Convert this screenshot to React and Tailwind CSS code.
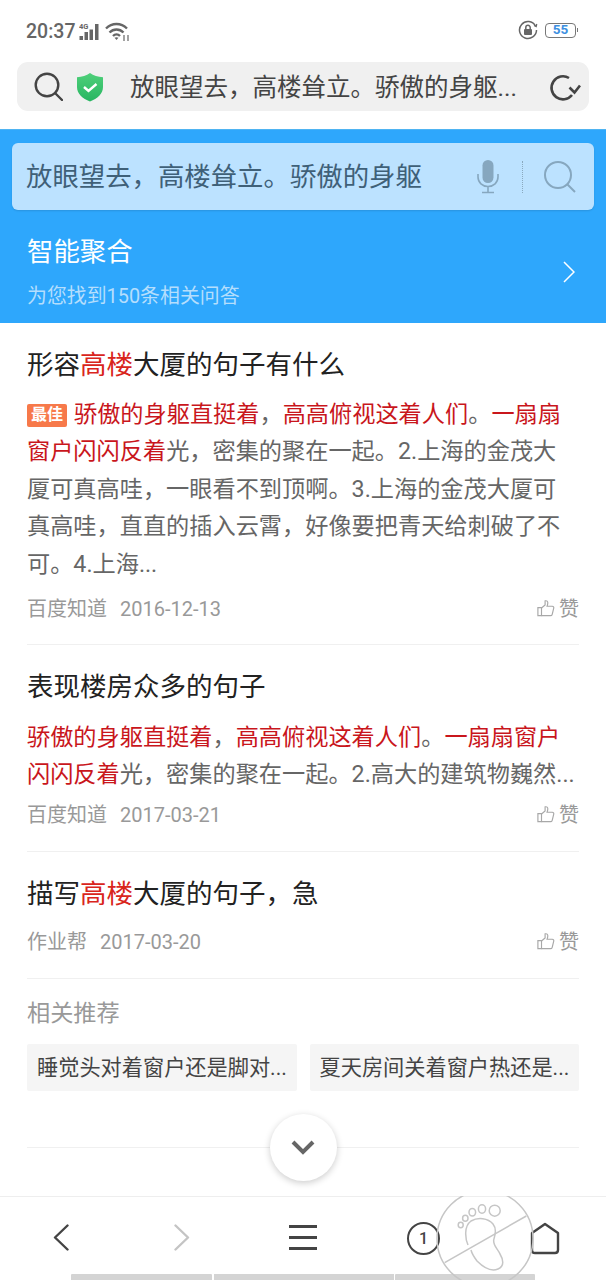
const CJK = { fontFamily: 'Roboto, "Noto Sans CJK SC", sans-serif' };

const R = ({ children }) => <span className="text-[#c9161c]">{children}</span>;

function Like() {
  return (
    <span className="flex items-center gap-[4px] text-[20px] leading-[26px] text-[#999999]">
      <svg width="18" height="19" viewBox="0 0 20 20" fill="none" stroke="#a8a8a8" strokeWidth="1.300" className="-mt-[2px]">
        <path d="M1 9h4v9H1z" />
        <path d="M5 9.500 9 6V1.500c2-.6 3 .8 3 2.200 0 1.300-.4 2.800-.8 3.800H17c1.200 0 1.900 1 1.600 2.100l-1.700 6.800c-.2.900-.9 1.600-1.900 1.600H5" />
      </svg>
      赞
    </span>
  );
}

function Meta({ source, date, className }) {
  return (
    <div className={`flex items-center justify-between text-[20px] leading-[26px] text-[#999999] ${className}`}>
      <span className="flex gap-[13px]">
        <span>{source}</span>
        <span>{date}</span>
      </span>
      <Like />
    </div>
  );
}

export default function App() {
  return (
    <div className="relative flex h-[1280px] w-[606px] flex-col overflow-hidden bg-white" style={CJK}>
      {/* status bar */}
      <div className="flex h-[62px] shrink-0 items-start justify-between pl-[26px] pr-[28px] pt-[20px]">
        <div className="flex items-center gap-[4px] text-[#666666]">
          <span className="text-[19.500px] font-medium leading-[24px]">20:37</span>
          <svg width="22" height="18" viewBox="0 0 22 18" fill="#666666">
            <text x="0" y="6" fontSize="7.500" fontWeight="700" fontFamily="Roboto, sans-serif">4G</text>
            <rect x="0.500" y="13" width="3.500" height="4" />
            <rect x="5.500" y="9" width="3.500" height="8" />
            <rect x="10.500" y="6.500" width="3.500" height="10.500" />
            <rect x="16" y="1" width="3.500" height="16" />
          </svg>
          <svg width="25" height="20" viewBox="0 0 25 20" fill="none" stroke="#666666" strokeWidth="2.400">
            <path d="M1 6.500c6-6 15-6 21 0" />
            <path d="M4.500 10.500c4-4 10-4 14 0" />
            <path d="M8 14c2-2 5-2 7 0" />
            <path d="M11.500 18l-2-2.200c1.200-.8 2.800-.8 4 0z" fill="#666666" stroke="none" />
            <path d="M19 13v6M23 13v6" strokeWidth="1.200" />
          </svg>
        </div>
        <div className="flex items-center gap-[7px]">
          <svg width="20" height="20" viewBox="0 0 20 20" fill="none" stroke="#666666" strokeWidth="1.500">
            <path d="M17.500 6A8.500 8.500 0 1 0 18.500 10" />
            <path d="M16 5.500l2.200 1.200L18.800 4" strokeWidth="1.200" />
            <rect x="6" y="9" width="8" height="6" rx="1" fill="#666666" stroke="none" />
            <path d="M7.800 9V7.500a2.200 2.200 0 0 1 4.400 0V9" />
          </svg>
          <div className="flex items-center">
            <div className="flex h-[15px] w-[31px] items-center justify-center rounded-[4px] border border-[#777777] text-[13.500px] font-bold leading-none text-[#3d8fe0]">55</div>
            <div className="ml-[1px] h-[4px] w-[1px] bg-[#777777]" />
          </div>
        </div>
      </div>

      {/* address bar */}
      <div className="flex h-[67px] shrink-0 flex-col px-[17px]">
        <div className="flex h-[49px] items-center rounded-[11px] bg-[#f0f0f0] pl-[17px] pr-[8px]">
          <svg width="29" height="29" viewBox="0 0 29 29" fill="none" stroke="#444444" strokeWidth="2.400" className="shrink-0">
            <circle cx="13" cy="13" r="11.300" />
            <path d="M21 21l7 7" strokeLinecap="round" />
          </svg>
          <svg width="28" height="30" viewBox="0 0 28 30" className="ml-[13px] shrink-0">
            <defs>
              <linearGradient id="sh" x1="0" y1="0" x2="0" y2="1">
                <stop offset="0" stopColor="#4fd07a" />
                <stop offset="1" stopColor="#27b561" />
              </linearGradient>
            </defs>
            <path d="M14 1c3.500 2.600 8 4 13 4.300V15c0 6.500-5.500 11.800-13 14.500C6.500 26.800 1 21.500 1 15V5.300C6 5 10.500 3.600 14 1z" fill="url(#sh)" />
            <path d="M8 15l4.500 4L20.500 12" fill="none" stroke="#ffffff" strokeWidth="2.400" />
          </svg>
          <span className="ml-[26px] flex-1 whitespace-nowrap pt-[1px] text-[24.500px] leading-[49px] text-[#444444]">放眼望去，高楼耸立。骄傲的身躯...</span>
          <svg width="33" height="30" viewBox="0 0 33 30" fill="none" stroke="#444444" strokeWidth="2.600" className="shrink-0">
            <path d="M21 6A11.500 11.500 0 1 0 24 23" />
            <path d="M21.500 15.500l5 5L32 13.500" />
          </svg>
        </div>
      </div>

      {/* blue header */}
      <div className="flex h-[194px] shrink-0 flex-col border-t border-[#4fb4f2] bg-[#2ea7fc] px-[12px] pt-[13px]">
        <div className="flex h-[67px] shrink-0 items-center rounded-[6px] bg-[#bce2ff] pl-[14px] pr-[18px] shadow-[0_1px_2px_rgba(0,0,0,0.12)]">
          <span className="flex-1 whitespace-nowrap pt-[2px] text-[26.400px] leading-none text-[#3f6078]">放眼望去，高楼耸立。骄傲的身躯</span>
          <svg width="22" height="34" viewBox="0 0 22 34" className="shrink-0">
            <rect x="5.500" y="0" width="11" height="23" rx="5.500" fill="#86a7bf" />
            <path d="M1 14v3c0 5.500 4.500 9.500 10 9.500s10-4 10-9.500v-3M11 27v5M5 32.500h12" fill="none" stroke="#86a7bf" strokeWidth="1.600" />
          </svg>
          <div className="ml-[23px] h-[32px] w-0 border-l border-dotted border-[#8aa9bf]" />
          <svg width="32" height="32" viewBox="0 0 32 32" fill="none" stroke="#86a7bf" strokeWidth="2" className="ml-[21px] shrink-0">
            <circle cx="14" cy="14" r="13" />
            <path d="M23.500 23.500l7.500 7.500" />
          </svg>
        </div>
        <div className="flex flex-1 items-start justify-between pl-[15px] pr-[19px] pt-[27px]">
          <div className="flex flex-col">
            <span className="text-[26.400px] leading-[30px] text-white">智能聚合</span>
            <span className="mt-[17px] text-[19.900px] leading-[26px] text-[#b5defc]">为您找到150条相关问答</span>
          </div>
          <svg width="12" height="22" viewBox="0 0 12 22" fill="none" stroke="#ffffff" strokeWidth="1.500" className="mt-[24px]">
            <path d="M1 1l10 10L1 21" />
          </svg>
        </div>
      </div>

      {/* list */}
      <div className="flex flex-1 flex-col px-[27px]">
        <div className="flex h-[322px] shrink-0 flex-col border-b border-[#f0f0f0] pt-[26px]">
          <h2 className="text-[26.500px] font-normal leading-[32px] text-[#222222]">形容<span className="text-[#d9251c]">高楼</span>大厦的句子有什么</h2>
          <div className="mt-[15px] h-[188px] whitespace-nowrap text-[23.200px] leading-[37.400px] text-[#666666]">
            <span className="mr-[7px] inline-flex h-[23px] w-[40px] items-center justify-center rounded-[2px] bg-[#f7794a] align-[2px] text-[16px] font-bold leading-none text-white">最佳</span>
            <R>骄傲的身躯直挺着</R>，<R>高高俯视这着人们</R>。<R>一扇扇</R>
            <br />
            <R>窗户闪闪反着</R>光，密集的聚在一起。2.上海的金茂大
            <br />
            厦可真高哇，一眼看不到顶啊。3.上海的金茂大厦可
            <br />
            真高哇，直直的插入云霄，好像要把青天给刺破了不
            <br />
            可。4.上海...
          </div>
          <Meta source="百度知道" date="2016-12-13" className="mt-[12px]" />
        </div>

        <div className="flex h-[207px] shrink-0 flex-col border-b border-[#f0f0f0] pt-[26px]">
          <h2 className="text-[26.500px] font-normal leading-[32px] text-[#222222]">表现楼房众多的句子</h2>
          <div className="mt-[16px] h-[75px] whitespace-nowrap text-[23.200px] leading-[37.400px] text-[#666666]">
            <R>骄傲的身躯直挺着</R>，<R>高高俯视这着人们</R>。<R>一扇扇窗户</R>
            <br />
            <R>闪闪反着</R>光，密集的聚在一起。2.高大的建筑物巍然...
          </div>
          <Meta source="百度知道" date="2017-03-21" className="mt-[8px]" />
        </div>

        <div className="flex h-[127px] shrink-0 flex-col border-b border-[#f0f0f0] pt-[26px]">
          <h2 className="text-[26.500px] font-normal leading-[32px] text-[#222222]">描写<span className="text-[#d9251c]">高楼</span>大厦的句子，急</h2>
          <Meta source="作业帮" date="2017-03-20" className="mt-[19px]" />
        </div>

        <div className="flex h-[169px] shrink-0 flex-col border-b border-[#f0f0f0] pt-[20px]">
          <span className="text-[23.200px] leading-[28px] text-[#999999]">相关推荐</span>
          <div className="mt-[17px] grid grid-cols-2 gap-[13px]">
            <div className="flex h-[47px] items-center overflow-hidden whitespace-nowrap rounded-[2px] bg-[#f5f5f5] pl-[10px] text-[21.200px] text-[#444444]">睡觉头对着窗户还是脚对...</div>
            <div className="flex h-[47px] items-center overflow-hidden whitespace-nowrap rounded-[2px] bg-[#f5f5f5] pl-[10px] text-[21.200px] text-[#444444]">夏天房间关着窗户热还是...</div>
          </div>
        </div>
      </div>

      {/* bottom toolbar */}
      <div className="flex h-[84px] shrink-0 flex-col border-t border-[#eeeeee] bg-white">
        <div className="flex h-[78px] items-start">
          <div className="flex w-[121px] justify-center pt-[27px]">
            <svg width="16" height="27" viewBox="0 0 16 27" fill="none" stroke="#444444" strokeWidth="2.400" strokeLinecap="round" strokeLinejoin="round">
              <path d="M14.500 1.500 2 13.500l12.500 12" />
            </svg>
          </div>
          <div className="flex w-[121px] justify-center pt-[27px]">
            <svg width="16" height="27" viewBox="0 0 16 27" fill="none" stroke="#c4c4c4" strokeWidth="2.400" strokeLinecap="round" strokeLinejoin="round">
              <path d="M1.500 1.500 14 13.500l-12.500 12" />
            </svg>
          </div>
          <div className="flex w-[121px] flex-col items-center gap-[8px] pt-[28px]">
            <div className="h-[3px] w-[28px] bg-[#444444]" />
            <div className="h-[3px] w-[28px] bg-[#444444]" />
            <div className="h-[3px] w-[28px] bg-[#444444]" />
          </div>
          <div className="flex w-[121px] justify-center pt-[25px]">
            <div className="flex h-[33px] w-[33px] items-center justify-center rounded-full border-[2.500px] border-[#444444] text-[16px] font-medium leading-none text-[#444444]">1</div>
          </div>
          <div className="flex w-[122px] justify-center pt-[25px]">
            <svg width="30" height="33" viewBox="0 0 30 33" fill="none" stroke="#444444" strokeWidth="2.400" strokeLinejoin="round">
              <path d="M15 2 28 11v17c0 2-1 3-3 3H5c-2 0-3-1-3-3V11z" />
            </svg>
          </div>
        </div>
        <div className="ml-[71px] flex h-[6px] w-[464px] gap-[1.500px]">
          <div className="h-full w-[141px] rounded-t-[1px] bg-[#d4d4d4]" />
          <div className="h-full w-[180px] bg-[#d4d4d4]" />
          <div className="h-full w-[140px] rounded-t-[1px] bg-[#d4d4d4]" />
        </div>
      </div>

      {/* floating scroll-down */}
      <div className="absolute left-[270px] top-[1114px] flex h-[67px] w-[67px] items-center justify-center rounded-full bg-white shadow-[0_2px_7px_rgba(0,0,0,0.2)]">
        <svg width="24" height="15" viewBox="0 0 24 15" fill="none" stroke="#666666" strokeWidth="4" className="-ml-[2px]">
          <path d="M2 2l10 10L22 2" />
        </svg>
      </div>

      {/* footprint watermark */}
      <svg className="absolute left-[436px] top-[1196px]" width="98" height="84" viewBox="0 0 98 84" fill="none" stroke="#c6c6c6" strokeWidth="1.500">
        <circle cx="49" cy="42.500" r="48" />
        <path d="M8.700 66.700 90.300 20" />
        <circle cx="58.700" cy="14.700" r="5.500" />
        <ellipse cx="46" cy="13" rx="3.600" ry="4.200" />
        <ellipse cx="36.300" cy="16.300" rx="3.300" ry="3.800" />
        <ellipse cx="29.300" cy="22.300" rx="2.700" ry="3" />
        <ellipse cx="24.700" cy="29" rx="2.500" ry="2.700" />
        <path d="M32 49C29 42 28 30 35 25c7-4 17-3 22 3 4 5 2 11 .7 16-.7 6 4.300 9 6.300 14 3 5 5 12-2 15-7 3-15-2-21-8-3-4-5-7-6-11" />
      </svg>
    </div>
  );
}
